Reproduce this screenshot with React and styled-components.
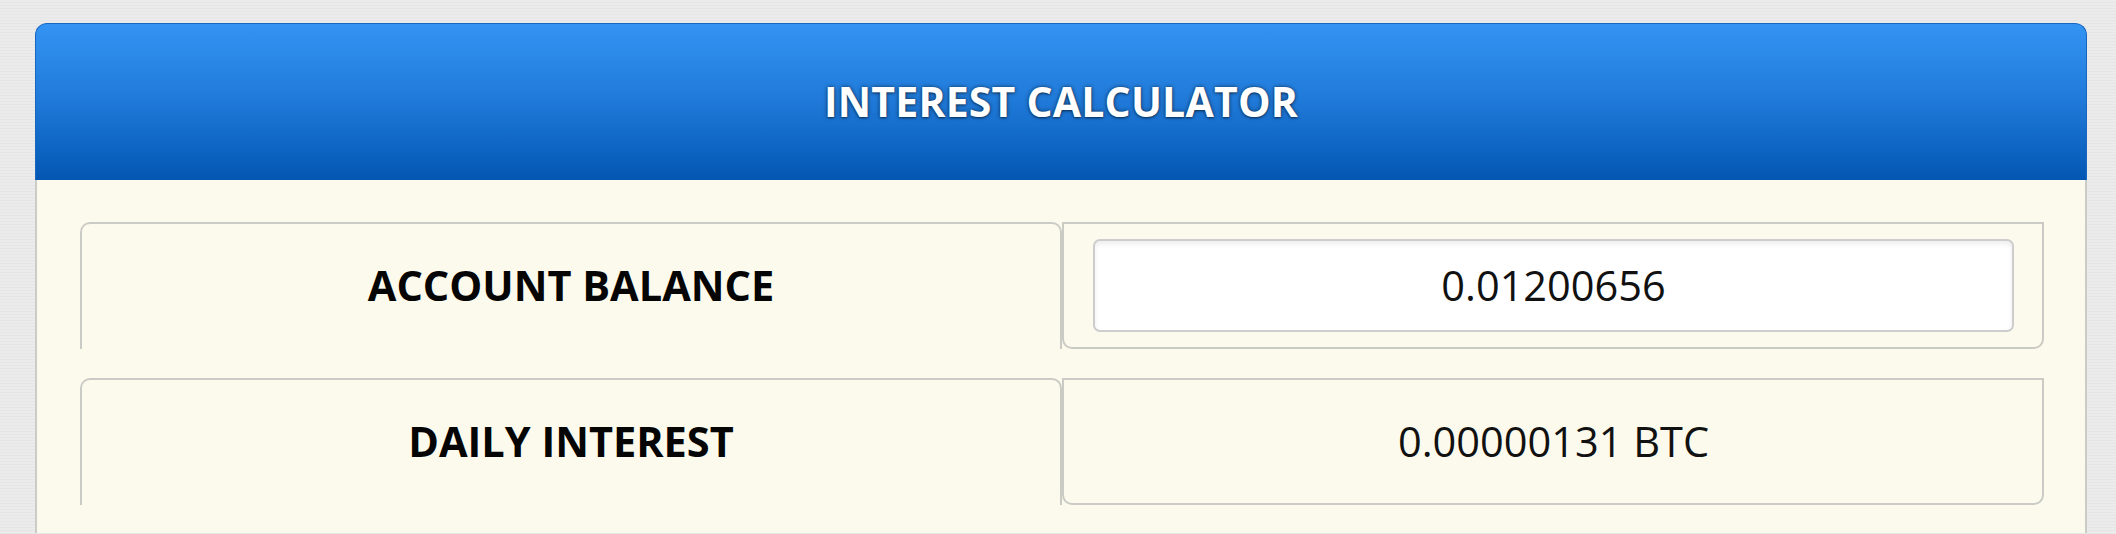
import React from "react";
import styled, { createGlobalStyle } from "styled-components";

const Global = createGlobalStyle`
  html, body { margin: 0; padding: 0; }
  body {
    background-color: #e9e9e9;
    background-image: repeating-linear-gradient(0deg, #e6e6e6 0px, #e6e6e6 1px, #ebebeb 1px, #ebebeb 3px);
    font-family: "Open Sans", "Noto Sans", sans-serif;
    min-height: 534px;
  }
`;

const Page = styled.div`
  padding: 23px 29px 0 35px;
`;

const Card = styled.section`
  display: flex;
  flex-direction: column;
  border-radius: 12px 12px 0 0;
  background: #fcfaec;
`;

const Header = styled.header`
  height: 156px;
  display: flex;
  align-items: center;
  justify-content: center;
  border: 1px solid #1766c0;
  border-bottom: none;
  border-radius: 12px 12px 0 0;
  background: linear-gradient(to bottom, #3494f3 0%, #1f79d8 50%, #0357b3 100%);
`;

const Title = styled.h1`
  margin: 0;
  padding-bottom: 3px;
  color: #ffffff;
  font-family: "Open Sans", "Noto Sans", sans-serif;
  font-weight: 700;
  font-size: 41px;
  letter-spacing: 0.2px;
  text-shadow: 0 0 4px rgba(0, 0, 0, 0.55), 0 1px 2px rgba(0, 0, 0, 0.4);
`;

const Body = styled.div`
  border-left: 2px solid #cbcbc8;
  border-right: 2px solid #cbcbc8;
  padding: 42px 41px 28px 43px;
  display: grid;
  grid-template-columns: 1fr 1fr;
  row-gap: 29px;
`;

const LabelCell = styled.div`
  height: 125px;
  display: flex;
  align-items: center;
  justify-content: center;
  border: 2px solid #cbcbc6;
  border-bottom: none;
  border-radius: 10px 10px 0 0;
`;

const Label = styled.span`
  font-family: "Open Sans", "Noto Sans", sans-serif;
  font-weight: 700;
  font-size: 41.5px;
  color: #050505;
  padding-bottom: 3px;
`;

const ValueCell = styled.div`
  height: 123px;
  display: flex;
  align-items: center;
  justify-content: center;
  padding: 0 28px 0 29px;
  border: 2px solid #cbcbc6;
  border-radius: 0 0 10px 10px;
`;

const ValueText = styled.span`
  font-family: "Open Sans", "Noto Sans", sans-serif;
  font-weight: 400;
  font-size: 41.5px;
  color: #111111;
  padding-bottom: 2px;
`;

const Input = styled.input`
  box-sizing: border-box;
  width: 100%;
  height: 93px;
  border: 2px solid #cdcdcd;
  border-radius: 7px;
  background: #ffffff;
  box-shadow: inset 0 3px 5px rgba(0, 0, 0, 0.07);
  text-align: center;
  font-family: "Open Sans", "Noto Sans", sans-serif;
  font-size: 41.5px;
  color: #111111;
  outline: none;
  padding: 0 0 2px 0;
`;

export default function App() {
  return (
    <>
      <Global />
      <Page>
        <Card>
          <Header>
            <Title>INTEREST CALCULATOR</Title>
          </Header>
          <Body>
            <LabelCell>
              <Label>ACCOUNT BALANCE</Label>
            </LabelCell>
            <ValueCell>
              <Input defaultValue="0.01200656" />
            </ValueCell>
            <LabelCell>
              <Label>DAILY INTEREST</Label>
            </LabelCell>
            <ValueCell>
              <ValueText>0.00000131 BTC</ValueText>
            </ValueCell>
          </Body>
        </Card>
      </Page>
    </>
  );
}
